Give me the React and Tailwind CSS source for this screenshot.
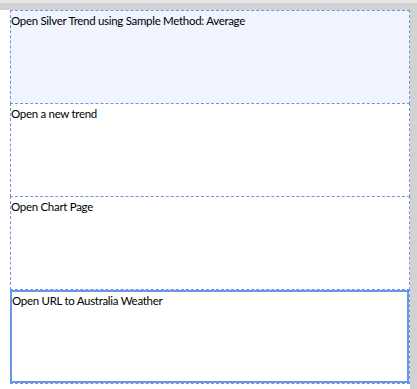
export default function App() {
  const items = [
    { t: "Open Silver Trend using Sample Method: Average", bg: "bg-[#f0f4fe]" },
    { t: "Open a new trend", bg: "bg-white" },
    { t: "Open Chart Page", bg: "bg-white" },
  ];
  return (
    <div
      className="w-[417px] h-[389px] bg-white flex flex-col overflow-hidden"
      style={{ fontFamily: 'Lato, "Open Sans", sans-serif' }}
    >
      <div className="h-[10px] flex flex-col shrink-0">
        <div className="h-[3px] bg-[#e6e6e6]" />
        <div className="flex-1 bg-[#d2d2d2]" />
      </div>
      <div className="flex flex-1">
        <div className="w-[10px] bg-white" />
        <div className="w-[400px] flex flex-col">
          {items.map((it, i) => (
            <div
              key={i}
              className={`h-[94px] ${i > 0 ? "-mt-px" : ""} border border-dashed border-[#6f94de] ${it.bg} text-[11.5px] leading-[16px] text-black pt-[2px] tracking-[-0.3px]`}
            >
              {it.t}
            </div>
          ))}
          <div className="h-[95px] -mt-px border border-dashed border-[#6f94de] bg-white">
            <div className="h-[93px] border-2 border-[#6b95e6] text-[11.5px] leading-[16px] text-black pt-px -ml-px tracking-[-0.3px]">
              Open URL to Australia Weather
            </div>
          </div>
        </div>
        <div className="w-[7px] bg-[#d2d2d2]" />
      </div>
    </div>
  );
}
